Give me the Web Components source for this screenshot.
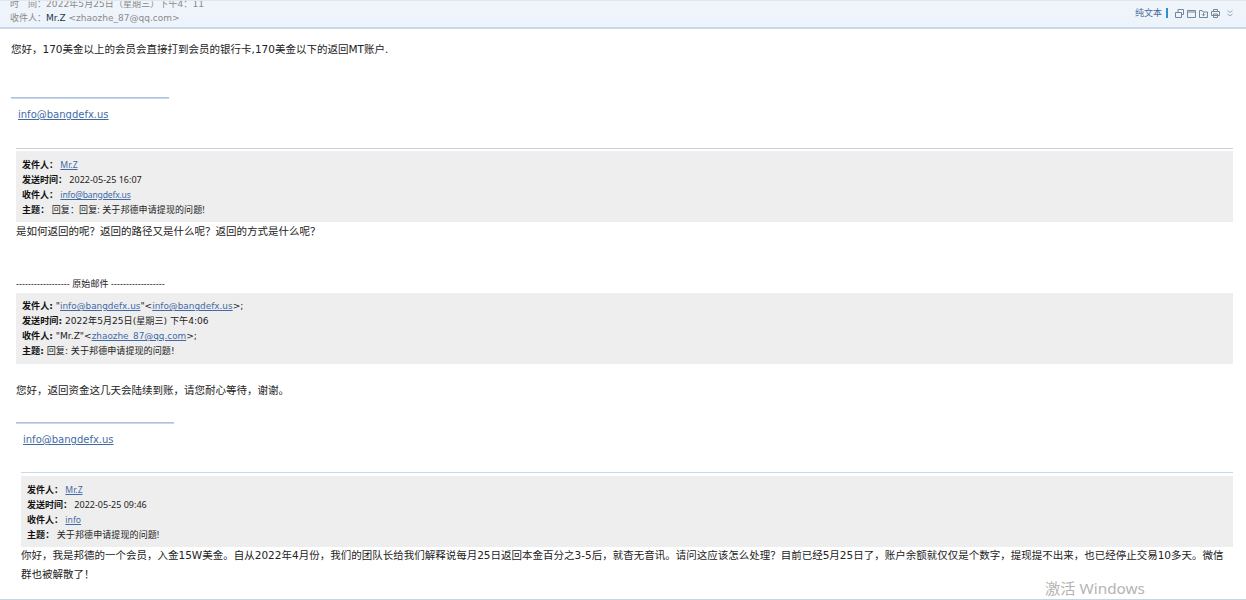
<!DOCTYPE html>
<html lang="zh"><head><meta charset="utf-8"><style>
html,body{margin:0;padding:0;background:#fff}
body{width:1246px;height:600px;overflow:hidden;font-family:"DejaVu Sans","Noto Sans CJK SC",sans-serif;color:#1c1c1c}
</style></head><body>
<mail-app></mail-app>
<script>
const FONT='"DejaVu Sans","Noto Sans CJK SC",sans-serif';
const NARROW='"Noto Sans","Noto Sans CJK SC",sans-serif';
const link='#3f6aa6';
class MailToolbar extends HTMLElement{constructor(){super();this.attachShadow({mode:'open'}).innerHTML=`<style>
:host{display:flex;align-items:center;gap:3px;height:24px;font-size:9px;color:#4a6a94}
.b{width:2px;height:10px;background:#2f8fd0;margin:0 4px 0 1px}
svg{width:9px;height:9px;fill:none;stroke:#76869a;stroke-width:1;display:block}
.s{margin:0 0 0 4px;width:6px;height:7px;stroke:#9aa6b4}
</style><span class="t">纯文本</span><span class="b"></span>
<svg viewBox="0 0 9 9"><path d="M3 3V.5h5.500v5H6.500M.5 3.500h6v5H.5z"/></svg>
<svg viewBox="0 0 9 9"><path d="M.5 1.500h8v7h-8zM.5 3h8"/></svg>
<svg viewBox="0 0 9 9"><path d="M.5 2V8.500h8v-5.500H4L3 1.500H.5zM4.500 4v2.500M3 5.300l1.500 1.500L6 5.300"/></svg>
<svg viewBox="0 0 9 9"><path d="M2.500 2.500V.5h4v2M.5 2.500h8v4h-8zM2.500 5h4v3.500h-4z"/></svg>
<svg class="s" viewBox="0 0 6 7"><path d="M.5.5l2.500 2 2.500-2M.5 4l2.500 2 2.500-2"/></svg>`}}
customElements.define('mail-toolbar',MailToolbar);
class MailHeader extends HTMLElement{constructor(){super();this.attachShadow({mode:'open'}).innerHTML=`<style>
:host{display:flex;justify-content:space-between;height:26px;overflow:hidden;padding:0 13px 0 10px;background:linear-gradient(#f0f5fb,#edf3fb);border-top:1px solid #e0e6ee;border-bottom:2px solid #c9d9ea;font-size:9px;line-height:14px;color:#8a8a8a}
.c{margin-top:-4px}b{font-weight:400;color:#26364e}.a{letter-spacing:.08px}
</style><div class="c"><div class="a">时&nbsp;&nbsp;&nbsp;间：2022年5月25日（星期三）下午4：11</div><div>收件人：<b>Mr.Z</b> &lt;zhaozhe_87@qq.com&gt;</div></div><mail-toolbar></mail-toolbar>`}}
customElements.define('mail-header',MailHeader);
class MailLink extends HTMLElement{constructor(){super();this.attachShadow({mode:'open'}).innerHTML=`<style>:host{display:inline;color:${link};text-decoration:underline}</style><slot></slot>`}}
customElements.define('mail-link',MailLink);
class MailPara extends HTMLElement{constructor(){super();this.attachShadow({mode:'open'}).innerHTML=`<style>:host{display:block;font-size:10.5px;line-height:19px;color:#222}</style><slot></slot>`}}
customElements.define('mail-para',MailPara);
class MailSig extends HTMLElement{constructor(){super();this.attachShadow({mode:'open'}).innerHTML=`<style>
:host{display:block}.r{width:158px;height:1px;background:#a9c0de;border-bottom:1px solid #c9d8ea}
.l{padding:8px 0 0 7px;font-size:10px;line-height:16px;color:${link};text-decoration:underline}
</style><div class="r"></div><div class="l"><slot></slot></div>`}}
customElements.define('mail-sig',MailSig);
class QuoteBox extends HTMLElement{constructor(){super();this.attachShadow({mode:'open'}).innerHTML=`<style>
:host{display:block;background:#eeeeee;padding:6px 6px 5px;font:9px/15px ${NARROW};color:#222}
:host([wide]){font:9.1px/15px ${FONT}}
</style><slot></slot>`}}
customElements.define('quote-box',QuoteBox);
class QuoteRow extends HTMLElement{constructor(){super();this.attachShadow({mode:'open'}).innerHTML=`<style>
:host{display:block;height:15px;white-space:nowrap}b{font-weight:700;color:#111}
</style><b></b><slot></slot>`;this.shadowRoot.querySelector('b').textContent=this.getAttribute('k')||''}}
customElements.define('quote-row',QuoteRow);
class MailApp extends HTMLElement{constructor(){super();this.attachShadow({mode:'open'}).innerHTML=`<style>
:host{display:block;height:600px;position:relative;overflow:hidden;font-family:${FONT};box-sizing:border-box;border-bottom:1px solid #c5d5e6}
.main{padding:0 13px 0 11px}
.p1{margin-top:11px}.s1{margin-top:38px}
.ind{margin-left:5px}
hr{border:0;height:1px;background:#c6d0dc;margin:0 0 2px;padding:0}
.h1{margin-top:25px}
.orig{font:9px/15px ${NARROW};margin-top:35px;color:#222;white-space:nowrap;letter-spacing:.09px}
.big{font-size:8.9px}
.short{font-size:8.6px}
.tight{font-size:8.6px;letter-spacing:-.2px}
.subj{letter-spacing:.1px}
.wm{position:absolute;left:1045px;top:576px;font:15.300px "Noto Sans","Noto Sans CJK SC",sans-serif;color:#b4b4b4}
</style>
<mail-header></mail-header>
<div class="main">
<mail-para class="p1">您好，170美金以上的会员会直接打到会员的银行卡,170美金以下的返回MT账户.</mail-para>
<mail-sig class="s1">info@bangdefx.us</mail-sig>
<div class="ind">
<hr class="h1">
<quote-box>
<quote-row k="发件人：">&nbsp;<mail-link class="short">Mr.Z</mail-link></quote-row>
<quote-row k="发送时间：">&nbsp;2022-05-25 16:07</quote-row>
<quote-row k="收件人：">&nbsp;<mail-link class="tight">info@bangdefx.us</mail-link></quote-row>
<quote-row k="主题：" class="subj">&nbsp;回复：回复: 关于邦德申请提现的问题!</quote-row>
</quote-box>
<mail-para>是如何返回的呢？返回的路径又是什么呢？返回的方式是什么呢？</mail-para>
<div class="orig">------------------ 原始邮件 ------------------</div>
<quote-box wide style="margin-top:2px">
<quote-row k="发件人:">&nbsp;"<mail-link class="big">info@bangdefx.us</mail-link>"&lt;<mail-link class="big">info@bangdefx.us</mail-link>&gt;;</quote-row>
<quote-row k="发送时间:">&nbsp;2022年5月25日(星期三) 下午4:06</quote-row>
<quote-row k="收件人:">&nbsp;"Mr.Z"&lt;<mail-link class="big">zhaozhe_87@qq.com</mail-link>&gt;;</quote-row>
<quote-row k="主题:">&nbsp;回复: 关于邦德申请提现的问题!</quote-row>
</quote-box>
<mail-para style="margin-top:17px">您好，返回资金这几天会陆续到账，请您耐心等待，谢谢。</mail-para>
<mail-sig style="margin-top:22px">info@bangdefx.us</mail-sig>
<div class="ind">
<hr style="margin-top:24px;margin-bottom:3px;background:#c9d8ea">
<quote-box>
<quote-row k="发件人：">&nbsp;<mail-link class="short">Mr.Z</mail-link></quote-row>
<quote-row k="发送时间：">&nbsp;2022-05-25 09:46</quote-row>
<quote-row k="收件人：">&nbsp;<mail-link class="short">info</mail-link></quote-row>
<quote-row k="主题：" class="subj">&nbsp;关于邦德申请提现的问题!</quote-row>
</quote-box>
<mail-para style="margin-top:-1px">你好，我是邦德的一个会员，入金15W美金。自从2022年4月份，我们的团队长给我们解释说每月25日返回本金百分之3-5后，就杳无音讯。请问这应该怎么处理？目前已经5月25日了，账户余额就仅仅是个数字，提现提不出来，也已经停止交易10多天。微信群也被解散了！</mail-para>
</div></div></div>
<div class="wm">激活 Windows</div>`}}
customElements.define('mail-app',MailApp);
</script></body></html>
